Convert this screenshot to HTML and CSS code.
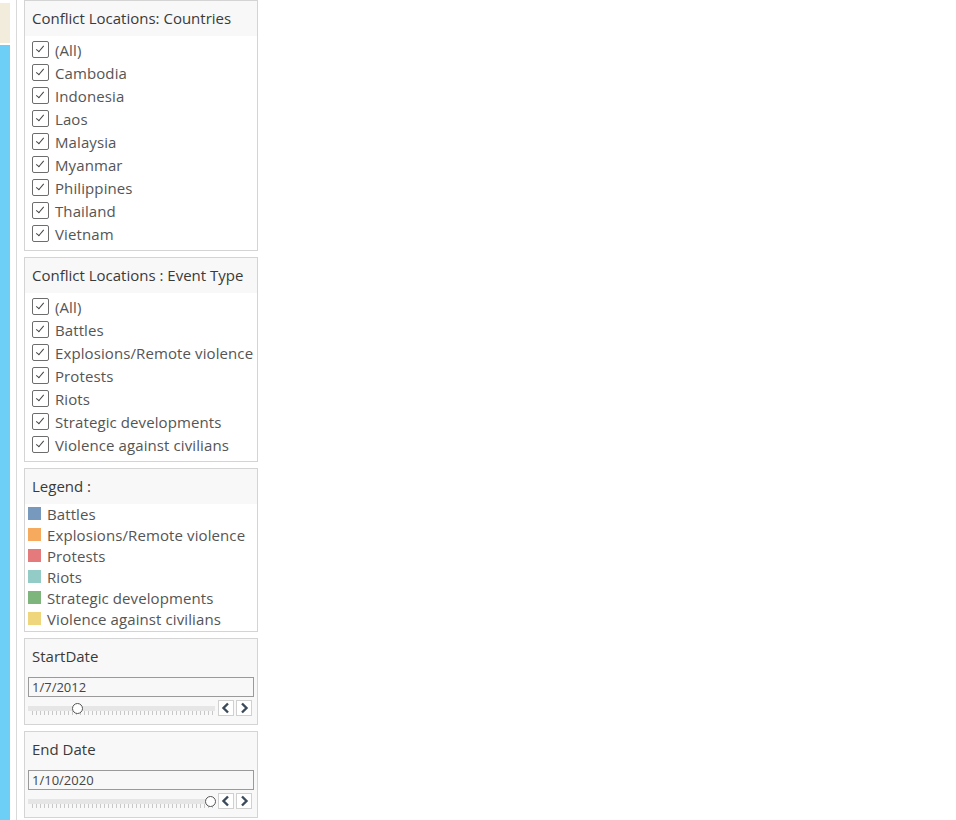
FILE: index.html
```html
<!DOCTYPE html>
<html>
<head>
<meta charset="utf-8">
<link rel="stylesheet" href="styles.css">
</head>
<body>
<div class="page">
  <div class="strip">
    <div class="strip-top"></div>
    <div class="strip-blue"></div>
  </div>
  <div class="divider"></div>
  <div class="sidebar">
    <section class="panel p-countries">
      <div class="title">Conflict Locations: Countries</div>
      <ul class="checks">
        <li><span class="cb"></span>(All)</li>
        <li><span class="cb"></span>Cambodia</li>
        <li><span class="cb"></span>Indonesia</li>
        <li><span class="cb"></span>Laos</li>
        <li><span class="cb"></span>Malaysia</li>
        <li><span class="cb"></span>Myanmar</li>
        <li><span class="cb"></span>Philippines</li>
        <li><span class="cb"></span>Thailand</li>
        <li><span class="cb"></span>Vietnam</li>
      </ul>
    </section>
    <section class="panel p-events">
      <div class="title">Conflict Locations : Event Type</div>
      <ul class="checks">
        <li><span class="cb"></span>(All)</li>
        <li><span class="cb"></span>Battles</li>
        <li><span class="cb"></span>Explosions/Remote violence</li>
        <li><span class="cb"></span>Protests</li>
        <li><span class="cb"></span>Riots</li>
        <li><span class="cb"></span>Strategic developments</li>
        <li><span class="cb"></span>Violence against civilians</li>
      </ul>
    </section>
    <section class="panel p-legend">
      <div class="title">Legend :</div>
      <ul class="legend">
        <li><span class="sw c1"></span>Battles</li>
        <li><span class="sw c2"></span>Explosions/Remote violence</li>
        <li><span class="sw c3"></span>Protests</li>
        <li><span class="sw c4"></span>Riots</li>
        <li><span class="sw c5"></span>Strategic developments</li>
        <li><span class="sw c6"></span>Violence against civilians</li>
      </ul>
    </section>
    <section class="panel p-date">
      <div class="title plain">StartDate</div>
      <div class="date-body">
        <div class="input">1/7/2012</div>
        <div class="slider-row">
          <div class="slider">
            <div class="track"></div>
            <div class="ticks"></div>
            <div class="knob knob-start"></div>
          </div>
          <button class="nav"><svg width="10" height="12" viewBox="0 0 10 12"><path d="M7 1.5 L2.5 6 L7 10.5" fill="none" stroke="#3b4a5a" stroke-width="2.4"/></svg></button>
          <button class="nav"><svg width="10" height="12" viewBox="0 0 10 12"><path d="M3 1.5 L7.5 6 L3 10.5" fill="none" stroke="#3b4a5a" stroke-width="2.4"/></svg></button>
        </div>
      </div>
    </section>
    <section class="panel p-date">
      <div class="title plain">End Date</div>
      <div class="date-body">
        <div class="input">1/10/2020</div>
        <div class="slider-row">
          <div class="slider">
            <div class="track full"></div>
            <div class="ticks"></div>
            <div class="knob knob-end"></div>
          </div>
          <button class="nav"><svg width="10" height="12" viewBox="0 0 10 12"><path d="M7 1.5 L2.5 6 L7 10.5" fill="none" stroke="#3b4a5a" stroke-width="2.4"/></svg></button>
          <button class="nav"><svg width="10" height="12" viewBox="0 0 10 12"><path d="M3 1.5 L7.5 6 L3 10.5" fill="none" stroke="#3b4a5a" stroke-width="2.4"/></svg></button>
        </div>
      </div>
    </section>
  </div>
</div>
</body>
</html>
```

FILE: styles.css
```css
* { box-sizing: border-box; }
html, body { margin: 0; padding: 0; background: #fff; }
body {
  font-family: "Open Sans", "Liberation Sans", sans-serif;
  color: #333;
  width: 956px;
  height: 820px;
  overflow: hidden;
}
.page {
  display: flex;
  align-items: stretch;
  height: 820px;
}
.strip {
  width: 10px;
  display: flex;
  flex-direction: column;
}
.strip-top {
  height: 40px;
  margin-top: 3px;
  background: #f2ecdd;
}
.strip-blue {
  flex: 1;
  margin-top: 2px;
  background: #6dcff6;
}
.divider {
  width: 1px;
  margin-left: 6px;
  background: #d9d9d9;
}
.sidebar {
  margin-left: 7px;
  width: 234px;
  display: flex;
  flex-direction: column;
  gap: 6px;
}
.panel {
  border: 1px solid #d4d4d4;
  background: #fff;
}
.title {
  background: #f8f8f8;
  height: 35px;
  padding: 7px 0 0 7px;
  font-size: 15px;
  color: #3a3a3a;
  white-space: nowrap;
}
.p-countries { height: 251px; }
.p-events { height: 205px; }
.p-legend { height: 164px; }
.p-date { height: 87px; background: #f8f8f8; }
.title.plain { background: transparent; height: 34px; }

.checks {
  list-style: none;
  margin: 2px 0 0 0;
  padding: 0 0 0 7px;
}
.checks li {
  height: 23px;
  display: flex;
  align-items: center;
  font-size: 15px;
  color: #555;
  letter-spacing: 0.1px;
  white-space: nowrap;
}
.cb {
  width: 17px;
  height: 17px;
  border: 1px solid #6d6d6d;
  border-radius: 2px;
  margin-right: 6px;
  position: relative;
  flex: none;
  background: #fff;
}
.cb::after {
  content: "";
  position: absolute;
  left: 5px;
  top: 2px;
  width: 3px;
  height: 7px;
  border-right: 1.5px solid #444;
  border-bottom: 1.5px solid #444;
  transform: rotate(40deg);
}
.legend {
  list-style: none;
  margin: -1px 0 0 0;
  padding: 0 0 0 3px;
}
.legend li {
  height: 21px;
  display: flex;
  align-items: center;
  font-size: 15px;
  color: #555;
  letter-spacing: 0.1px;
  white-space: nowrap;
}
.sw {
  width: 13px;
  height: 13px;
  margin-right: 6px;
  flex: none;
}
.c1 { background: #7799be; }
.c2 { background: #f5aa5e; }
.c3 { background: #e57a7c; }
.c4 { background: #93ccc6; }
.c5 { background: #7db57c; }
.c6 { background: #efd67c; }

.date-body {
  padding: 4px 3px 0 3px;
}
.input {
  height: 20px;
  border: 1px solid #9a9a9a;
  background: #f8f8f8;
  font-size: 13px;
  color: #444;
  padding: 0 0 0 3px;
  line-height: 18px;
}
.slider-row {
  display: flex;
  align-items: flex-start;
  margin-top: 2px;
}
.slider {
  flex: 1;
  position: relative;
  height: 18px;
  margin-right: 3px;
}
.track {
  position: absolute;
  left: 0;
  right: 0;
  top: 7px;
  height: 5px;
  background: #e6e6e6;
}
.ticks {
  position: absolute;
  left: 4px;
  right: 2px;
  top: 12px;
  height: 4px;
  background: repeating-linear-gradient(to right, #c8c8c8 0, #c8c8c8 1px, transparent 1px, transparent 4px);
}
.knob {
  position: absolute;
  top: 4px;
  width: 11px;
  height: 11px;
  border-radius: 50%;
  border: 1px solid #555;
  background: #fff;
}
.knob-start { left: 44px; }
.knob-end { right: -1px; }
.nav {
  width: 16px;
  height: 16px;
  margin: 1px 2px 0 0;
  padding: 0;
  border: 1px solid #d0d0d0;
  background: #fff;
  display: flex;
  align-items: center;
  justify-content: center;
}
```
